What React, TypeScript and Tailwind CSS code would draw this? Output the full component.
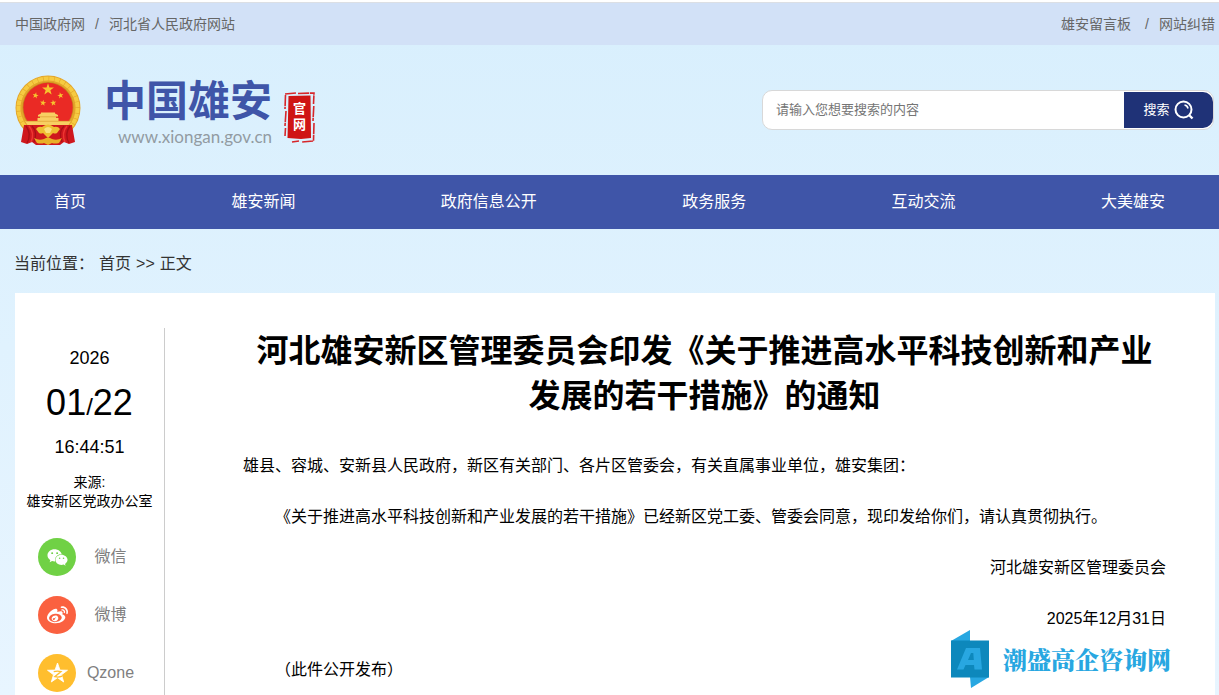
import React from "react";
import { FaWeibo, FaWeixin } from "react-icons/fa";

const navItems = ["首页", "雄安新闻", "政府信息公开", "政务服务", "互动交流", "大美雄安"];

const STAR = "M0 -10 L2.35 -3.24 L9.51 -3.09 L3.8 1.24 L5.88 8.09 L0 4 L-5.88 8.09 L-3.8 1.24 L-9.51 -3.09 L-2.35 -3.24 Z";

function Emblem() {
  return (
    <svg viewBox="0 0 68 72" className="h-[72px] w-[68px] shrink-0" role="img" aria-label="国徽">
      <circle cx="34" cy="34" r="32.500" fill="#e3a52a" />
      <circle cx="34" cy="34" r="29.500" fill="none" stroke="#f6cb41" strokeWidth="4" strokeDasharray="5 .6" />
      <circle cx="34" cy="33.500" r="25.500" fill="#c98a1c" />
      <circle cx="34" cy="33.500" r="24.700" fill="#ea2a25" />
      <path d={STAR} fill="#f6c52e" transform="translate(34 15.500) scale(.62)" />
      <path d={STAR} fill="#f6c52e" transform="translate(21.500 21.500) rotate(12) scale(.32)" />
      <path d={STAR} fill="#f6c52e" transform="translate(46.500 21.500) rotate(-12) scale(.32)" />
      <path d={STAR} fill="#f6c52e" transform="translate(29 29) rotate(8) scale(.32)" />
      <path d={STAR} fill="#f6c52e" transform="translate(39.300 29) rotate(-8) scale(.32)" />
      <path d="M27 38.500 H41 V39.500 L44 41 V42.500 H24 V41 L27 39.500 Z M26 42.500 H42 V44 H44.500 V47 H57 L54.500 51 H13.500 L11 47 H23.500 V44 H26 Z" fill="#f8cf62" />
      <path d="M24 42.800 H44 M11.500 47.300 H56.500" stroke="#dfa032" strokeWidth=".7" />
      <path d="M10 51 H58 L61 68 L55 70 L50 68 L46 71 H22 L18 68 L13 70 L7 68 Z" fill="#cf171d" />
      <path d="M12 52 Q18 60 13 69 M18 52 Q24 58 20 68 M56 52 Q50 60 55 69 M50 52 Q44 58 48 68" stroke="#a80f16" strokeWidth="1.300" fill="none" />
      <path d="M15 52 Q21 59 17 68 M53 52 Q47 59 51 68" stroke="#ee3732" strokeWidth="1.500" fill="none" />
      <path d="M22 55 Q24 52 28 53 Q31 50.500 34 50.500 Q37 50.500 40 53 Q44 52 46 55 L43 59 Q41 60 39 59 L34 64 L29 59 Q27 60 25 59 Z" fill="#efbd32" />
      <path d="M30 55 Q34 51 38 55 L36 59 H32 Z" fill="#fae07c" />
      <path d="M20 64 Q25 67 30 65 Q34 62 38 65 Q43 67 48 64 L45 69 Q41 70 38 69 L34 71 L30 69 Q27 70 23 69 Z" fill="#e9b027" />
    </svg>
  );
}

function Seal() {
  return (
    <div className="grid h-[51px] w-[31px] shrink-0 place-items-center">
      <svg viewBox="0 0 31 51" className="col-start-1 row-start-1 h-[51px] w-[31px]" aria-hidden="true">
        <path d="M4.500 4 L26.500 3.500 L27 46 L17 47 L3.500 46 L4 26 Z" fill="#cf1414" />
        <path d="M1 2 L12 1 M14 1.500 L30 1 L29.500 12 M29.800 14 L29 29 M30 31 L29.500 49 L18 50 M15 49 L8 50 M1.500 3 L1 17 M2 19 L1 34 M1.500 36 L1 44" fill="none" stroke="#d7262a" strokeWidth="1.600" strokeDasharray="11 .8 6 .6" />
      </svg>
      <span className="col-start-1 row-start-1 w-4 text-center text-[13px] leading-4 font-bold text-white">官网</span>
    </div>
  );
}

function SearchIcon() {
  return (
    <svg viewBox="0 0 20 20" className="size-5" fill="none" stroke="white" strokeWidth="2" aria-hidden="true">
      <circle cx="9.5" cy="9.5" r="8" />
      <path d="M15 15 L18.5 18.5" strokeWidth="2.4" />
      <path d="M10.5 5 Q13.5 5.5 14 8.5" strokeWidth="1.6" />
    </svg>
  );
}

function QzoneIcon() {
  return (
    <svg viewBox="-10 -10 20 20" className="size-[21px]" aria-hidden="true">
      <path d={STAR} fill="white" stroke="white" strokeLinejoin="round" strokeWidth=".8" />
      <path d="M-3.600 -1.800 Q0 -2.800 3.400 -1.800 L-2.600 3 Q1 4 4.500 2.600" fill="none" stroke="#ffbe2e" strokeWidth="1.300" />
    </svg>
  );
}

const shares = [
  { name: "微信", color: "bg-[#70d145]", icon: <FaWeixin className="size-[21px]" /> },
  { name: "微博", color: "bg-[#fa6140]", icon: <FaWeibo className="size-[21px]" /> },
  { name: "Qzone", color: "bg-[#ffbe2e]", icon: <QzoneIcon /> },
];

function Watermark() {
  return (
    <div className="absolute right-11 bottom-[7px] flex items-center gap-[14px]">
      <svg viewBox="0 0 38 58" className="h-[58px] w-[38px]" aria-hidden="true">
        <path d="M0 11 L19 0 V11 Z M19 47 H38 L20 58 Z" fill="#28a7e1" />
        <path d="M0 10.500 H38 V47.500 H0 Z" fill="#0d88bc" />
        <path d="M6 39.500 L15 18 H29 L31 39.500 H23.500 L23 35 H14.500 L12.500 39.500 Z M17 30 H22.800 L22.300 23 H20 Z" fillRule="evenodd" fill="#28a7e1" />
      </svg>
      <span className="font-['Noto_Serif_CJK_SC','Noto_Sans_CJK_SC',serif] text-2xl leading-8 font-black text-[#28a7e1]">潮盛高企咨询网</span>
    </div>
  );
}

export default function App() {
  return (
    <div className="flex min-h-screen flex-col bg-linear-to-b from-[#d8effd] to-[#e8f5ff] font-['Liberation_Sans','Noto_Sans_CJK_SC',sans-serif] text-black">
      <div className="border-t-2 border-white">
        <div className="flex h-[43px] items-center justify-between border-t border-[#dcdfe4] bg-[#d2e1f7] pr-1 pl-[15px] text-sm text-[#666]">
          <div className="flex gap-[10px]">
            <a href="#gov">中国政府网</a>
            <span>/</span>
            <a href="#hebei">河北省人民政府网站</a>
          </div>
          <div className="flex">
            <a href="#message">雄安留言板</a>
            <span className="pr-[10px] pl-[14px]">/</span>
            <a href="#correction">网站纠错</a>
          </div>
        </div>
      </div>

      <header className="flex h-[130px] items-center justify-between pr-[5px] pl-[14px]">
        <a href="#home" className="flex items-center">
          <Emblem />
          <div className="ml-[22px] flex flex-col pt-1">
            <span className="text-[42px] leading-[50px] font-bold text-[#3f55a8]">中国雄安</span>
            <span className="pl-[14px] font-['Lato',sans-serif] text-[17px] leading-5 text-[#929ba2]">www.xiongan.gov.cn</span>
          </div>
          <div className="ml-3 pt-[14px]">
            <Seal />
          </div>
        </a>
        <form className="flex h-10 w-[452px] rounded-[10px] border border-[#d8d8d8] bg-white py-px" onSubmit={(e) => e.preventDefault()}>
          <input
            type="search"
            aria-label="搜索内容"
            placeholder="请输入您想要搜索的内容"
            className="min-w-0 flex-1 bg-transparent px-[13px] text-[13px] outline-none placeholder:text-[#757575]"
          />
          <button type="submit" className="flex w-[89px] items-center justify-center gap-1 rounded-r-[10px] bg-[#1f3277] text-[13px] text-white">
            搜索
            <SearchIcon />
          </button>
        </form>
      </header>

      <nav className="flex h-[54px] items-center justify-between bg-[#3f55a8] px-[54px] text-base text-white">
        {navItems.map((item) => (
          <a key={item} href={`#${item}`}>{item}</a>
        ))}
      </nav>

      <div className="flex h-16 items-center pt-[5px] pl-[14px] text-base text-[#333]">
        <span className="pr-[5px]">当前位置：</span>
        <a href="#home">首页</a>
        <span className="px-[5px]">&gt;&gt;</span>
        <span>正文</span>
      </div>

      <main className="relative mr-1 ml-[15px] flex flex-1 bg-white pt-[35px]">
        <aside className="flex w-[150px] shrink-0 flex-col border-r border-[#ccc] text-center">
          <time className="flex flex-col pt-4">
            <span className="text-lg leading-7">2026</span>
            <span className="pt-2 text-2xl leading-[46px]">
              <span className="text-4xl leading-[46px]">01</span>/<span className="text-4xl leading-[46px]">22</span>
            </span>
            <span className="pt-[3px] text-lg leading-7">16:44:51</span>
          </time>
          <p className="pt-3 text-sm leading-[19px]">来源:<br />雄安新区党政办公室</p>
          <ul className="flex flex-col gap-5 pt-[27px] pl-[23px]">
            {shares.map((s) => (
              <li key={s.name}>
                <a href={`#${s.name}`} className="flex items-center text-base text-[#808080]">
                  <span className={`flex size-[38px] items-center justify-center rounded-full text-white ${s.color}`}>{s.icon}</span>
                  <span className="w-[69px] text-center">{s.name}</span>
                </a>
              </li>
            ))}
          </ul>
        </aside>

        <article className="min-w-0 flex-1 pr-[49px] pl-[78px] text-base">
          <h1 className="pt-px text-center text-[32px] leading-[45px] font-bold">
            河北雄安新区管理委员会印发《关于推进高水平科技创新和产业<wbr />发展的若干措施》的通知
          </h1>
          <div className="flex flex-col gap-5 pt-[31px] leading-[31px]">
            <p>雄县、容城、安新县人民政府，新区有关部门、各片区管委会，有关直属事业单位，雄安集团：</p>
            <p className="indent-8">《关于推进高水平科技创新和产业发展的若干措施》已经新区党工委、管委会同意，现印发给你们，请认真贯彻执行。</p>
            <p className="text-right">河北雄安新区管理委员会</p>
            <p className="text-right">2025年12月31日</p>
            <p className="indent-8">（此件公开发布）</p>
          </div>
        </article>
        <Watermark />
      </main>
    </div>
  );
}
